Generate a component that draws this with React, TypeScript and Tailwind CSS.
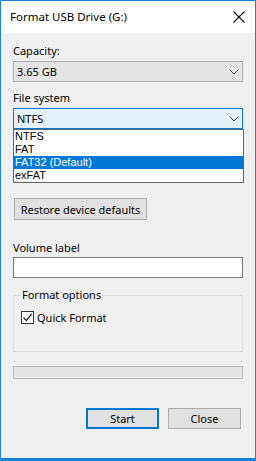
import React from "react";

const Chevron = () => (
  <svg width="10" height="6" viewBox="0 0 10 6" className="mr-[3px]">
    <path d="M0.5 0.5 L5 5 L9.5 0.5" fill="none" stroke="#505050" strokeWidth="1" />
  </svg>
);

const listFont = { fontFamily: '"Liberation Sans", Arial, sans-serif' };

export default function App() {
  return (
    <div
      className="w-[256px] h-[461px] bg-[#f0f0f0] border border-[#1883d7] border-b-[3px] flex flex-col text-[11px] text-black overflow-hidden"
      style={{ fontFamily: '"Noto Sans", "Open Sans", sans-serif' }}
    >
      {/* title bar */}
      <div className="h-[32px] bg-white flex items-center justify-between pl-[9px] pr-[10px] shrink-0">
        <span className="text-[11.5px] leading-none">Format USB Drive (G:)</span>
        <svg width="12" height="12" viewBox="0 0 12 12">
          <path d="M0.5 0.5 L11.5 11.5 M11.5 0.5 L0.5 11.5" stroke="#111" strokeWidth="1.1" />
        </svg>
      </div>

      <div className="flex flex-col px-[12px] pt-[10px]">
        <div className="h-[16px] leading-[16px]">Capacity:</div>
        <div className="mt-[2px] h-[21px] bg-[#e5e5e5] border border-[#adadad] flex items-center justify-between pl-[3px] w-[230px]">
          <span className="leading-none">3.65 GB</span>
          <Chevron />
        </div>
        <div className="mt-[8px] h-[16px] leading-[16px]">File system</div>
        <div className="relative mt-[2px] w-[230px]">
          <div className="h-[21px] bg-[#e5f1fb] border border-[#0078d7] flex items-center justify-between pl-[3px]">
            <span className="leading-none">NTFS</span>
            <Chevron />
          </div>
          <div
            className="absolute left-0 top-[21px] w-[231px] bg-white border border-[#646464] z-10 flex flex-col text-[11px]"
            style={listFont}
          >
            <div className="h-[13px] leading-[13px] pl-[1px]">NTFS</div>
            <div className="h-[13px] leading-[13px] pl-[1px]">FAT</div>
            <div className="h-[13px] leading-[13px] pl-[1px] bg-[#0078d7] text-white">FAT32 (Default)</div>
            <div className="h-[13px] leading-[13px] pl-[1px]">exFAT</div>
          </div>
        </div>

        <div className="mt-[69px] ml-[1px] w-[133px] h-[22px] bg-[#e1e1e1] border border-[#adadad] flex items-center justify-center">
          <span className="leading-none">Restore device defaults</span>
        </div>

        <div className="mt-[20px] h-[16px] leading-[16px]">Volume label</div>
        <div className="mt-[1px] w-[230px] h-[21px] bg-white border border-[#7a7a7a]" />

        <div className="relative mt-[17px] w-[230px] h-[57px] border border-[#dcdcdc]">
          <span className="absolute -top-[9px] left-[7px] bg-[#f0f0f0] px-[1px] leading-[16px]">Format options</span>
          <div className="flex items-center mt-[15px] ml-[7px]">
            <div className="w-[13px] h-[13px] bg-white border border-[#333] flex items-center justify-center">
              <svg width="11" height="11" viewBox="0 0 11 11">
                <path d="M1.5 5.5 L4.3 8.5 L9.8 1.8" fill="none" stroke="#222" strokeWidth="1.2" />
              </svg>
            </div>
            <span className="ml-[3px] leading-none">Quick Format</span>
          </div>
        </div>

        <div className="mt-[14px] w-[230px] h-[13px] bg-[#e6e6e6] border border-[#bcbcbc]" />

        <div className="mt-[29px] flex justify-end gap-[9px] pr-[2px]">
          <div className="w-[73px] h-[21px] bg-[#e1e1e1] border-2 border-[#0078d7] flex items-center justify-center">
            <span className="leading-none">Start</span>
          </div>
          <div className="w-[73px] h-[21px] bg-[#e1e1e1] border border-[#adadad] flex items-center justify-center">
            <span className="leading-none">Close</span>
          </div>
        </div>
      </div>
    </div>
  );
}
